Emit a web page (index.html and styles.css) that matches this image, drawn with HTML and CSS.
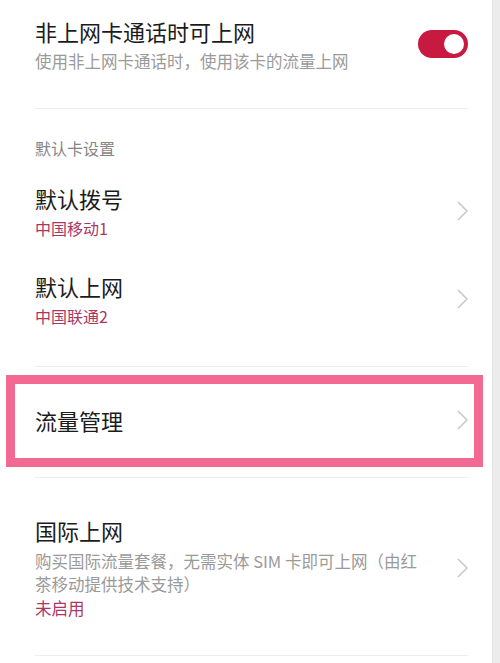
FILE: index.html
```html
<!DOCTYPE html>
<html lang="zh-CN">
<head>
<meta charset="utf-8">
<title>双卡设置</title>
<link rel="stylesheet" href="styles.css">
</head>
<body>
<div class="page">
  <main class="list">
    <section class="row row-switch">
      <div class="text">
        <div class="title">非上网卡通话时可上网</div>
        <div class="desc">使用非上网卡通话时，使用该卡的流量上网</div>
      </div>
      <div class="toggle"><span class="knob"></span></div>
    </section>

    <section class="row group">
      <div class="group-title">默认卡设置</div>
      <div class="item">
        <div class="text">
          <div class="title">默认拨号</div>
          <div class="value">中国移动1</div>
        </div>
        <svg class="chev" width="11" height="20" viewBox="0 0 11 20"><polyline points="1,1 10,10 1,19" fill="none" stroke="#c6c6c6" stroke-width="1.5"/></svg>
      </div>
      <div class="item item-second">
        <div class="text">
          <div class="title">默认上网</div>
          <div class="value">中国联通2</div>
        </div>
        <svg class="chev" width="11" height="20" viewBox="0 0 11 20"><polyline points="1,1 10,10 1,19" fill="none" stroke="#c6c6c6" stroke-width="1.5"/></svg>
      </div>
    </section>

    <section class="row row-highlight">
      <div class="highlight">
        <div class="title">流量管理</div>
        <svg class="chev" width="11" height="20" viewBox="0 0 11 20"><polyline points="1,1 10,10 1,19" fill="none" stroke="#c6c6c6" stroke-width="1.5"/></svg>
      </div>
    </section>

    <section class="row row-intl">
      <div class="text text-wide">
        <div class="title">国际上网</div>
        <div class="desc desc-multi">购买国际流量套餐，无需实体 SIM 卡即可上网（由红茶移动提供技术支持）</div>
        <div class="value value-intl">未启用</div>
      </div>
      <svg class="chev" width="11" height="20" viewBox="0 0 11 20"><polyline points="1,1 10,10 1,19" fill="none" stroke="#c6c6c6" stroke-width="1.5"/></svg>
    </section>
  </main>
  <div class="strip"></div>
</div>
</body>
</html>
```

FILE: styles.css
```css
html, body {
  margin: 0;
  padding: 0;
  background: #ffffff;
}

body {
  font-family: "Noto Sans CJK SC", "Noto Sans", sans-serif;
  color: #1b1b1b;
}

.page {
  display: flex;
  min-height: 663px;
}

.list {
  width: 492px;
  flex: none;
}

.strip {
  flex: 1;
  background: #ececec;
  border-left: 1px solid #e2e2e2;
}

.row {
  margin: 0 24px 0 35px;
  border-bottom: 1px solid #ededed;
}

.title {
  font-size: 22px;
  line-height: 30px;
  color: #1b1b1b;
}

.desc {
  font-size: 16.5px;
  line-height: 23px;
  color: #9a9a9a;
  margin-top: 4px;
}

.value {
  font-size: 16px;
  line-height: 22px;
  color: #ab3763;
  margin-top: 4px;
}

.row-switch {
  display: flex;
  align-items: center;
  justify-content: space-between;
  padding: 16px 0 35px;
}

.toggle {
  width: 50px;
  height: 28px;
  border-radius: 14px;
  background: #c81a41;
  display: flex;
  align-items: center;
  justify-content: flex-end;
  padding-right: 4px;
  box-sizing: border-box;
  margin-top: -2px;
}

.knob {
  width: 20px;
  height: 20px;
  border-radius: 50%;
  background: #ffffff;
}

.group {
  padding: 28px 0 39px;
}

.group-title {
  font-size: 16px;
  line-height: 22px;
  color: #858585;
  margin-bottom: 24px;
}

.item {
  display: flex;
  align-items: center;
  justify-content: space-between;
}

.item-second {
  margin-top: 32px;
}

.chev {
  flex: none;
  display: block;
}

.row-highlight {
  padding: 8px 0 10px;
}

.highlight {
  margin: 0 -15px 0 -29px;
  height: 92px;
  box-sizing: border-box;
  border: 9px solid #f26a92;
  display: flex;
  align-items: center;
  justify-content: space-between;
  padding: 0 6px 2px 20px;
}

.row-intl {
  display: flex;
  align-items: center;
  justify-content: space-between;
  padding: 37px 0 35px;
}

.text-wide {
  width: 395px;
}

.desc-multi {
  margin-top: 5px;
}

.value-intl {
  font-size: 16.5px;
  line-height: 23px;
  margin-top: 1px;
}
```
